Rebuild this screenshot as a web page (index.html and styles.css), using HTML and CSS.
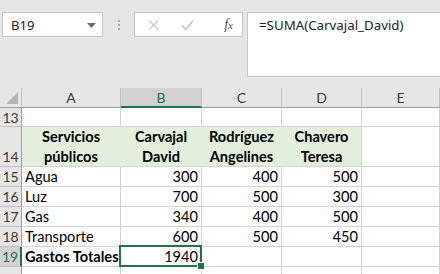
FILE: index.html
```html
<!DOCTYPE html>
<html lang="es">
<head>
    <meta charset="UTF-8">
    <title>Gastos</title>
    <link rel="stylesheet" href="styles.css">
</head>
<body>
    <div class="toolbar">
        <div class="namebox">
            <span>B19</span>
            <svg class="drop" width="9" height="5" viewBox="0 0 9 5"><path d="M0 0h9L4.5 5z" fill="#6a6a6a"/></svg>
        </div>
        <div class="grip"><i></i><i></i><i></i></div>
        <div class="fxbuttons">
            <svg width="12" height="12" viewBox="0 0 12 12"><path d="M1 1l10 10M11 1L1 11" stroke="#c4c4c4" stroke-width="1.3"/></svg>
            <svg width="14" height="12" viewBox="0 0 14 12"><path d="M1 6.5l4 4L13 1.5" stroke="#c4c4c4" stroke-width="1.8" fill="none"/></svg>
            <span class="fx">f<small>x</small></span>
        </div>
        <div class="formula">=SUMA(Carvajal_David)</div>
    </div>

    <div class="sheet">
        <!-- column headers -->
        <div class="corner"><svg width="12" height="12" viewBox="0 0 12 12"><path d="M12 0v12H0z" fill="#b5b5b5"/></svg></div>
        <div class="colhead">A</div>
        <div class="colhead active">B</div>
        <div class="colhead">C</div>
        <div class="colhead">D</div>
        <div class="colhead">E</div>

        <!-- row 13 -->
        <div class="rowhead">13</div>
        <div class="cell"></div><div class="cell"></div><div class="cell"></div><div class="cell"></div><div class="cell"></div>

        <!-- row 14 -->
        <div class="rowhead bottom">14</div>
        <div class="cell title">Servicios<br>públicos</div>
        <div class="cell title">Carvajal<br>David</div>
        <div class="cell title">Rodríguez<br>Angelines</div>
        <div class="cell title last">Chavero<br>Teresa</div>
        <div class="cell"></div>

        <div class="rowhead">15</div>
        <div class="cell">Agua</div><div class="cell num">300</div><div class="cell num">400</div><div class="cell num">500</div><div class="cell"></div>

        <div class="rowhead">16</div>
        <div class="cell">Luz</div><div class="cell num">700</div><div class="cell num">500</div><div class="cell num">300</div><div class="cell"></div>

        <div class="rowhead">17</div>
        <div class="cell">Gas</div><div class="cell num">340</div><div class="cell num">400</div><div class="cell num">500</div><div class="cell"></div>

        <div class="rowhead">18</div>
        <div class="cell">Transporte</div><div class="cell num">600</div><div class="cell num">500</div><div class="cell num">450</div><div class="cell"></div>

        <div class="rowhead active">19</div>
        <div class="cell bold">Gastos Totales</div><div class="cell num selected">1940</div><div class="cell"></div><div class="cell"></div><div class="cell"></div>

        <!-- row 20, only its top edge is visible -->
        <div class="rowhead"></div>
        <div class="cell"></div><div class="cell"></div><div class="cell"></div><div class="cell"></div><div class="cell"></div>
    </div>
</body>
</html>
```

FILE: styles.css
```css
:root {
    --chrome: #e6e6e6;
    --grid: #d4d4d4;
    --head-line: #c0c0c0;
    --box-border: #c6c6c6;
    --green: #217346;
    --fill: #e2efda;
    --text: #000000;
}

body {
    margin: 0;
    background: #ffffff;
    overflow: hidden;
    font-family: Lato, "Liberation Sans", sans-serif;
}

.toolbar {
    height: 88px;
    box-sizing: border-box;
    padding-top: 12px;
    background: var(--chrome);
    display: flex;
    align-items: flex-start;
    font-family: "Noto Sans", "Open Sans", sans-serif;
}

.namebox {
    margin-left: 2px;
    width: 101px;
    height: 25px;
    box-sizing: border-box;
    border: 1px solid var(--box-border);
    background: #fff;
    display: flex;
    align-items: center;
    justify-content: space-between;
    padding: 0 6px 0 8px;
    font-size: 13px;
    color: #222;
}

.drop {
    margin-top: 1px;
}

.grip {
    width: 31px;
    height: 25px;
    display: flex;
    flex-direction: column;
    align-items: center;
    justify-content: center;
    gap: 2px;
}

.grip i {
    width: 2px;
    height: 2px;
    background: #a8a8a8;
}

.fxbuttons {
    width: 109px;
    height: 25px;
    box-sizing: border-box;
    border: 1px solid var(--box-border);
    border-right: none;
    background: #fff;
    display: flex;
    align-items: center;
    padding-left: 13px;
    gap: 22px;
}

.fx {
    font-family: "Liberation Serif", serif;
    font-style: italic;
    font-size: 14px;
    color: #4a4a4a;
    margin-left: 8px;
    padding-right: 9px;
    border-right: 1px solid var(--box-border);
    line-height: 23px;
}

.fx small {
    font-size: 11px;
}

.formula {
    margin-left: 4px;
    flex: 1;
    height: 65px;
    box-sizing: border-box;
    border: 1px solid var(--box-border);
    border-right: none;
    background: #fff;
    padding: 3px 0 0 11px;
    font-size: 13.3px;
    color: #222;
}

.sheet {
    display: grid;
    grid-template-columns: 22px 99px 81px 80px 80px 1fr;
    grid-template-rows: 20px 19px 40px repeat(6, 20px);
    font-size: 14.6px;
    color: var(--text);
}

.sheet > div {
    box-sizing: border-box;
    border-right: 1px solid var(--grid);
    border-bottom: 1px solid var(--grid);
}

.corner {
    background: var(--chrome);
    display: flex;
    align-items: flex-end;
    justify-content: flex-end;
    padding: 0 3px 3px 0;
}

.sheet > .corner,
.sheet > .colhead {
    border-right-color: var(--head-line);
    border-bottom-color: #9f9f9f;
}

.colhead {
    background: var(--chrome);
    color: #3c3c3c;
    font-size: 14px;
    display: flex;
    align-items: center;
    justify-content: center;
}

.sheet > .colhead.active {
    background: #d2d2d2;
    color: var(--green);
    border-bottom: 2px solid var(--green);
}

.sheet > .rowhead {
    background: var(--chrome);
    border-right-color: #9f9f9f;
    border-bottom-color: var(--head-line);
    color: #3c3c3c;
    font-size: 14px;
    display: flex;
    align-items: center;
    justify-content: center;
}

.sheet > .rowhead.bottom {
    align-items: flex-end;
    padding-bottom: 1px;
}

.sheet > .rowhead.active {
    background: #d2d2d2;
    color: var(--green);
    border-right: 2px solid var(--green);
}

.cell {
    display: flex;
    align-items: center;
    padding: 0 3px;
    white-space: nowrap;
    line-height: 19px;
}

.num {
    justify-content: flex-end;
}

.bold {
    font-weight: bold;
}

.sheet > .title {
    background: var(--fill);
    border-right-color: var(--fill);
    justify-content: center;
    text-align: center;
    font-weight: bold;
    line-height: 20px;
}

.sheet > .title.last {
    border-right-color: var(--grid);
}

.selected {
    position: relative;
}

.selected::before {
    content: "";
    position: absolute;
    left: -2px;
    top: -2px;
    right: -1px;
    bottom: -1px;
    border: 2px solid var(--green);
}

.selected::after {
    content: "";
    position: absolute;
    right: -4px;
    bottom: -4px;
    width: 6px;
    height: 6px;
    background: var(--green);
    border: 1px solid #fff;
}
```
